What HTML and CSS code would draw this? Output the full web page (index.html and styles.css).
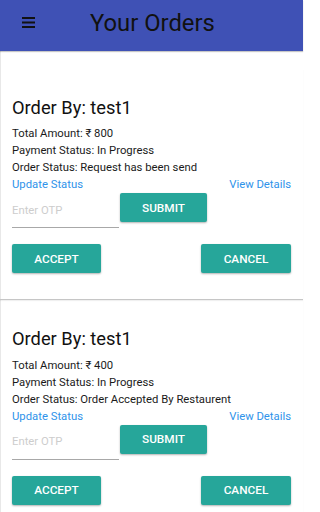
FILE: index.html
```html
<!DOCTYPE html>
<html lang="en">
<head>
<meta charset="utf-8">
<title>Your Orders</title>
<link rel="stylesheet" href="styles.css">
</head>
<body>
<div class="page">
  <header class="appbar">
    <svg class="menu" width="13" height="11" viewBox="0 0 13 11" aria-hidden="true">
      <rect x="0" y="0" width="13" height="2" fill="#111"/>
      <rect x="0" y="4.5" width="13" height="2" fill="#111"/>
      <rect x="0" y="9" width="13" height="2" fill="#111"/>
    </svg>
    <h1 class="appbar-title">Your Orders</h1>
  </header>

  <section class="card">
    <h2 class="card-title">Order By: test1</h2>
    <p class="info">Total Amount: ₹ 800</p>
    <p class="info">Payment Status: In Progress</p>
    <p class="info">Order Status: Request has been send</p>
    <div class="links">
      <a class="link" href="#">Update Status</a>
      <a class="link" href="#">View Details</a>
    </div>
    <div class="otp-row">
      <input class="otp" type="text" placeholder="Enter OTP">
      <button class="btn">SUBMIT</button>
    </div>
    <div class="actions">
      <button class="btn btn-wide">ACCEPT</button>
      <button class="btn btn-wide">CANCEL</button>
    </div>
  </section>

  <section class="card">
    <h2 class="card-title">Order By: test1</h2>
    <p class="info">Total Amount: ₹ 400</p>
    <p class="info">Payment Status: In Progress</p>
    <p class="info">Order Status: Order Accepted By Restaurent</p>
    <div class="links">
      <a class="link" href="#">Update Status</a>
      <a class="link" href="#">View Details</a>
    </div>
    <div class="otp-row">
      <input class="otp" type="text" placeholder="Enter OTP">
      <button class="btn">SUBMIT</button>
    </div>
    <div class="actions">
      <button class="btn btn-wide">ACCEPT</button>
      <button class="btn btn-wide">CANCEL</button>
    </div>
  </section>
</div>
</body>
</html>
```
FILE: styles.css
```css
* { box-sizing: border-box; }
html, body { margin: 0; padding: 0; background: #fff; }
body { font-family: Roboto, "Noto Sans", "DejaVu Sans", sans-serif; color: #111; overflow: hidden; }

.page {
  width: 303px;
  min-height: 100vh;
  box-shadow: inset 1px 0 0 #e8e8e8;
}

.appbar {
  height: 51px;
  background: #3f51b5;
  display: flex;
  align-items: flex-start;
  padding-left: 22px;
  box-shadow: 0 1px 1px rgba(0,0,0,0.22);
  margin-bottom: 18px;
}
.menu { margin-top: 17px; flex: none; }
.appbar-title {
  margin: 8.5px 0 0 55px;
  font-size: 23.8px;
  line-height: 28px;
  font-weight: 400;
  color: #111;
}

.card {
  padding: 28px 12px 26px 12px;
  border-bottom: 1px solid #c6c6c6;
  box-shadow: 0 1px 1px rgba(0,0,0,0.06);
}
.card-title {
  margin: 0;
  font-size: 18.3px;
  line-height: 22px;
  font-weight: 400;
  color: #111;
}
.info {
  margin: 0;
  font-size: 11.3px;
  line-height: 17px;
  color: #1a1a1a;
}
.card-title + .info { margin-top: 6.3px; }

.links {
  display: flex;
  justify-content: space-between;
  font-size: 11.3px;
  line-height: 17px;
}
.link { color: #2f93ea; text-decoration: none; }

.otp-row {
  display: flex;
  align-items: flex-start;
}
.otp {
  width: 107px;
  height: 35px;
  border: 0;
  border-bottom: 1px solid #a8a8a8;
  padding: 0;
  margin: 0 1px 0 0;
  font-family: inherit;
  font-size: 11.3px;
  color: #111;
  background: transparent;
  outline: none;
}
.otp::placeholder { color: #cdcdcd; }

.btn {
  width: 87px;
  height: 29px;
  border: 0;
  border-radius: 2px;
  background: #26a69a;
  color: #fff;
  font-family: inherit;
  font-size: 11.8px;
  font-weight: 500;
  padding: 0;
  box-shadow: 0 1px 2px rgba(0,0,0,0.3);
}
.btn-wide { width: 89px; }

.actions {
  display: flex;
  justify-content: space-between;
  margin-top: 16px;
}
.actions .btn:last-child { width: 90px; }
```
